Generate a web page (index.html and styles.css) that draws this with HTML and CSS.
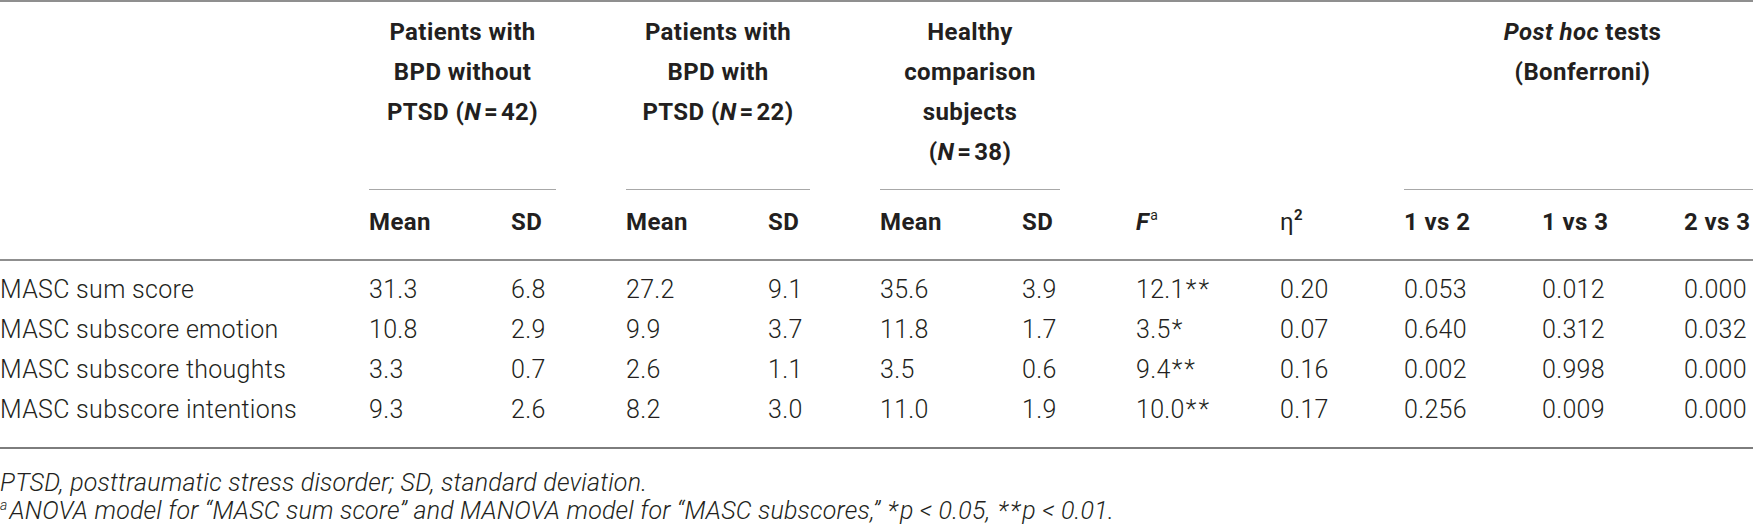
FILE: index.html
```html
<!DOCTYPE html>
<html lang="en">
<head>
<meta charset="utf-8">
<title>MASC table</title>
<link rel="stylesheet" href="styles.css">
</head>
<body>
<div class="table">
  <div class="grid head-groups">
    <div class="cell empty c1"></div>
    <div class="group g1">Patients with<br>BPD without<br>PTSD (<i>N</i>&#8202;=&#8202;42)</div>
    <div class="group g2">Patients with<br>BPD with<br>PTSD (<i>N</i>&#8202;=&#8202;22)</div>
    <div class="group g3">Healthy<br>comparison<br>subjects<br>(<i>N</i>&#8202;=&#8202;38)</div>
    <div class="group posthoc"><span class="ph-text"><i>Post hoc</i> tests<br>(Bonferroni)</span></div>
  </div>
  <div class="grid head-cols">
    <div class="hc"></div>
    <div class="hc">Mean</div>
    <div class="hc">SD</div>
    <div class="hc">Mean</div>
    <div class="hc">SD</div>
    <div class="hc">Mean</div>
    <div class="hc">SD</div>
    <div class="hc"><i>F</i><sup class="sa">a</sup></div>
    <div class="hc eta">η<sup class="s2">2</sup></div>
    <div class="hc">1 vs 2</div>
    <div class="hc">1 vs 3</div>
    <div class="hc">2 vs 3</div>
  </div>
  <div class="grid body">
    <div class="td">MASC sum score</div><div class="td">31.3</div><div class="td">6.8</div><div class="td">27.2</div><div class="td">9.1</div><div class="td">35.6</div><div class="td">3.9</div><div class="td">12.1<span class="ast">**</span></div><div class="td">0.20</div><div class="td">0.053</div><div class="td">0.012</div><div class="td">0.000</div>
    <div class="td">MASC subscore emotion</div><div class="td">10.8</div><div class="td">2.9</div><div class="td">9.9</div><div class="td">3.7</div><div class="td">11.8</div><div class="td">1.7</div><div class="td">3.5<span class="ast">*</span></div><div class="td">0.07</div><div class="td">0.640</div><div class="td">0.312</div><div class="td">0.032</div>
    <div class="td">MASC subscore thoughts</div><div class="td">3.3</div><div class="td">0.7</div><div class="td">2.6</div><div class="td">1.1</div><div class="td">3.5</div><div class="td">0.6</div><div class="td">9.4<span class="ast">**</span></div><div class="td">0.16</div><div class="td">0.002</div><div class="td">0.998</div><div class="td">0.000</div>
    <div class="td">MASC subscore intentions</div><div class="td">9.3</div><div class="td">2.6</div><div class="td">8.2</div><div class="td">3.0</div><div class="td">11.0</div><div class="td">1.9</div><div class="td">10.0<span class="ast">**</span></div><div class="td">0.17</div><div class="td">0.256</div><div class="td">0.009</div><div class="td">0.000</div>
  </div>
  <div class="notes">
    <p>PTSD, posttraumatic stress disorder; SD, standard deviation.</p>
    <p><sup class="na">a</sup>ANOVA model for “MASC sum score” and MANOVA model for “MASC subscores,” <span class="ast">*</span>p &lt; 0.05, <span class="ast">**</span>p &lt; 0.01.</p>
  </div>
</div>
</body>
</html>
```

FILE: styles.css
```css
html, body {
  margin: 0;
  padding: 0;
  background: #ffffff;
}

body {
  color: #231f20;
  font-family: Roboto, "Liberation Sans", Arial, sans-serif;
  font-size: 25px;
}

.table {
  width: 1753px;
}

.grid {
  display: grid;
  grid-template-columns: 369px 142px 115px 142px 112px 142px 114px 144px 124px 138px 142px 69px;
}

.head-groups {
  border-top: 2px solid #8f8f8f;
}

.group {
  font-size: 24px;
  font-weight: 700;
  letter-spacing: 0.4px;
  line-height: 40px;
  text-align: center;
  padding: 10px 0 17px;
  border-bottom: 1px solid #a8a8a8;
  white-space: nowrap;
}

.g1 { grid-column: 2 / 4; margin-right: 70px; }
.g2 { grid-column: 4 / 6; margin-right: 70px; }
.g3 { grid-column: 6 / 8; margin-right: 76px; }
.posthoc { grid-column: 10 / 13; padding-left: 8px; }

.head-cols {
  border-bottom: 2px solid #8f8f8f;
}

.hc {
  font-size: 24px;
  font-weight: 700;
  letter-spacing: 0.4px;
  line-height: 40px;
  padding: 12px 0 17px;
  white-space: nowrap;
}

.sa {
  font-size: 14px;
  font-weight: 400;
  vertical-align: 10px;
  line-height: 0;
  margin-left: 1px;
}

.s2 {
  font-size: 15px;
  font-weight: 700;
  vertical-align: 10px;
  line-height: 0;
}

.eta {
  font-weight: 400;
}

.body {
  padding: 9px 0 17px;
  border-bottom: 2px solid #7d7d7d;
}

.td {
  font-weight: 300;
  letter-spacing: 0.3px;
  line-height: 40px;
  white-space: nowrap;
}

.ast {
  letter-spacing: 2px;
  margin-left: 1px;
}

.notes {
  padding-top: 20px;
  font-style: italic;
  font-weight: 300;
  letter-spacing: 0.2px;
}

.notes p {
  margin: 0;
  line-height: 28px;
}

.na {
  font-size: 14px;
  vertical-align: 9px;
  line-height: 0;
  margin-right: 2px;
}
```
